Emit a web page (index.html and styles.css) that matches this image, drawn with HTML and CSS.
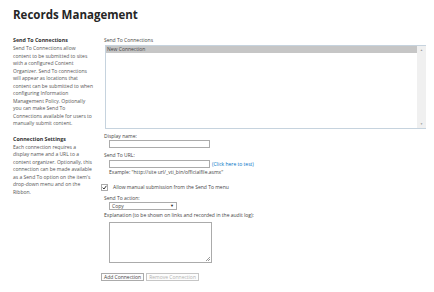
FILE: index.html
```html
<!DOCTYPE html>
<html lang="en">
<head>
    <meta charset="UTF-8">
    <meta name="viewport" content="width=device-width, initial-scale=1.0">
    <title>Records Management</title>
    <link rel="stylesheet" href="styles.css">
</head>
<body>

<div class="page">
    <h1 class="page-title">Records Management</h1>

    <div class="settings">
        <!-- Descriptions -->
        <div class="side">
            <h3>Send To Connections</h3>
            <p>Send To Connections allow content to be submitted to sites with a configured Content Organizer. Send To connections will appear as locations that content can be submitted to when configuring Information Management Policy. Optionally you can make Send To Connections available for users to manually submit content.</p>

            <h3 class="second">Connection Settings</h3>
            <p>Each connection requires a display name and a URL to a content organizer. Optionally, this connection can be made available as a Send To option on the item's drop-down menu and on the Ribbon.</p>
        </div>

        <!-- Form -->
        <div class="main">
            <div class="label">Send To Connections</div>
            <div class="listbox">
                <div class="list-items">
                    <div class="list-item selected">New Connection</div>
                </div>
                <div class="scrollbar">
                    <span class="arrow">&#9650;</span>
                    <span class="arrow">&#9660;</span>
                </div>
            </div>

            <div class="label gap">Display name:</div>
            <div class="field"><div class="textbox"></div></div>

            <div class="label gap">Send To URL:</div>
            <div class="field url-row">
                <div class="textbox"></div>
                <a href="#" class="test-link">(Click here to test)</a>
            </div>
            <div class="example">Example: "http://site url/_vti_bin/officialfile.asmx"</div>

            <div class="check-row">
                <span class="checkbox">
                    <svg width="5" height="5" viewBox="0 0 5 5"><path d="M0.6 2.6 L2 4 L4.4 0.8" fill="none" stroke="#333" stroke-width="1"/></svg>
                </span>
                <span>Allow manual submission from the Send To menu</span>
            </div>

            <div class="label gap">Send To action:</div>
            <div class="field">
                <div class="dropdown"><span>Copy</span><span class="caret">&#9660;</span></div>
            </div>

            <div class="label explain">Explanation (to be shown on links and recorded in the audit log):</div>
            <div class="field"><div class="textarea"><span class="grip"></span></div></div>

            <div class="buttons">
                <button class="btn">Add Connection</button>
                <button class="btn" disabled>Remove Connection</button>
            </div>
        </div>
    </div>
</div>

</body>
</html>
```

FILE: styles.css
```css
/* General Styling */
* {
    box-sizing: border-box;
    margin: 0;
    padding: 0;
}

body {
    font-family: "Open Sans", "Liberation Sans", sans-serif;
    font-size: 5px;
    color: #444;
    background: white;
}

.page {
    padding: 7px 0 0 13px;
}

.page-title {
    font-size: 11.5px;
    font-weight: bold;
    color: #262626;
    line-height: 16px;
}

.settings {
    display: flex;
    margin-top: 13px;
}

/* Left column */
.side {
    width: 91px;
}

.side h3 {
    font-size: 5.3px;
    font-weight: bold;
    color: #333;
    line-height: 9px;
}

.side h3.second {
    margin-top: 7px;
}

.side p {
    width: 80px;
    line-height: 7.5px;
    color: #555;
}

/* Right column */
.main {
    flex: 1;
    padding-right: 8px;
}

.label {
    line-height: 8px;
}

.label.gap {
    margin-top: 3px;
}

.label.explain {
    line-height: 7px;
    margin-top: 2px;
}

.listbox {
    display: flex;
    height: 84px;
    margin-top: 1px;
    margin-left: 1px;
    border: 1px solid #c6d3de;
    border-right: none;
}

.list-items {
    flex: 1;
}

.list-item {
    line-height: 7px;
    padding-left: 1px;
}

.list-item.selected {
    background: #c6c6c6;
}

.scrollbar {
    width: 9px;
    background: #f0f0f0;
    display: flex;
    flex-direction: column;
    justify-content: space-between;
    align-items: center;
    padding: 2px 0;
}

.arrow {
    font-size: 3px;
    color: #999;
}

.field {
    padding-left: 5px;
    display: flex;
    align-items: center;
}

.textbox {
    width: 101px;
    height: 8px;
    border: 1px solid #ababab;
    background: white;
}

.url-row {
    margin-top: 1px;
}

.test-link {
    margin-left: 2px;
    color: #0072c6;
    text-decoration: none;
}

.example {
    padding-left: 5px;
    line-height: 8px;
}

.check-row {
    display: flex;
    align-items: center;
    margin: 7px 0 1px -3px;
    height: 8px;
}

.checkbox {
    width: 7px;
    height: 7px;
    border: 1px solid #ababab;
    display: flex;
    align-items: center;
    justify-content: center;
    margin-right: 5px;
}

.dropdown {
    width: 68px;
    height: 8px;
    border: 1px solid #ababab;
    display: flex;
    justify-content: space-between;
    align-items: center;
    padding: 0 2px;
    line-height: 6px;
}

.caret {
    font-size: 4px;
    color: #222;
}

.textarea {
    position: relative;
    width: 103px;
    height: 41px;
    margin-top: 3px;
    border: 1px solid #ababab;
}

.grip {
    position: absolute;
    right: 1px;
    bottom: 1px;
    width: 4px;
    height: 4px;
    background: linear-gradient(135deg, transparent 45%, #999 45%, #999 55%, transparent 55%, transparent 70%, #999 70%, #999 80%, transparent 80%);
}

.buttons {
    display: flex;
    gap: 2px;
    margin-top: 10px;
    margin-left: -3px;
}

.btn {
    height: 8px;
    padding: 0 2px;
    border: 1px solid #ababab;
    background: #fdfdfd;
    font-family: inherit;
    font-size: 5px;
    color: #444;
    line-height: 6px;
}

.btn:disabled {
    color: #b1b1b1;
    border-color: #c6c6c6;
}
```
